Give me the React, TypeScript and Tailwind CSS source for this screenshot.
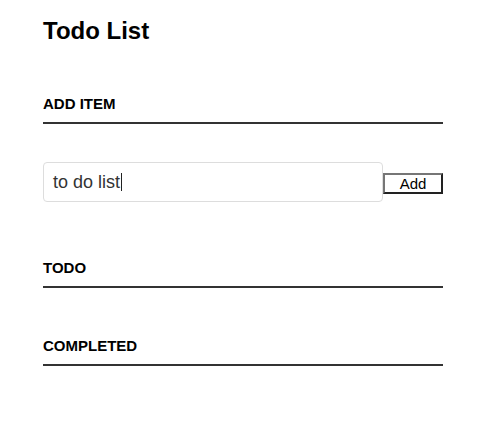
import { useState } from 'react'

type SectionProp = {
  title: string
  className?: string
}

function SectionHeading({ title, className }: SectionProp) {
  return (
    <h3
      className={`text-[15px] leading-[17px] font-bold text-black uppercase pb-[10px] border-b-2 border-[#333] ${className ?? ''}`}
    >
      {title}
    </h3>
  )
}

export default function App() {
  const [value, setValue] = useState('to do list')

  return (
    <div
      className="min-h-[429px] bg-white"
      style={{ fontFamily: '"Liberation Sans", Arial, sans-serif' }}
    >
      <div className="ml-[43px] w-[400px] pt-[17px]">
        <h1 className="text-[24px] leading-[28px] font-bold text-black">Todo List</h1>

        <SectionHeading title="Add item" className="mt-[50px]" />
        <div className="flex mt-[38px]">
          <div className="relative w-[340px] h-[40px] border border-[#ddd] rounded-[4px] flex items-center px-[9px]">
            <input
              value={value}
              onChange={(e) => setValue(e.target.value)}
              className="absolute inset-0 opacity-0 w-full"
            />
            <span className="text-[18px] text-[#333] leading-[20px]">{value}</span>
            <span className="w-px h-[18px] bg-[#222] ml-[1px]"></span>
          </div>
          <button className="self-start mt-[11px] w-[60px] h-[21px] bg-white border-2 border-t-[#767676] border-l-[#767676] border-r-[#222] border-b-[#222] text-[15px] leading-[15px] text-black">
            Add
          </button>
        </div>

        <SectionHeading title="Todo" className="mt-[57px]" />
        <ul></ul>

        <SectionHeading title="Completed" className="mt-[49px]" />
        <ul></ul>
      </div>
    </div>
  )
}
